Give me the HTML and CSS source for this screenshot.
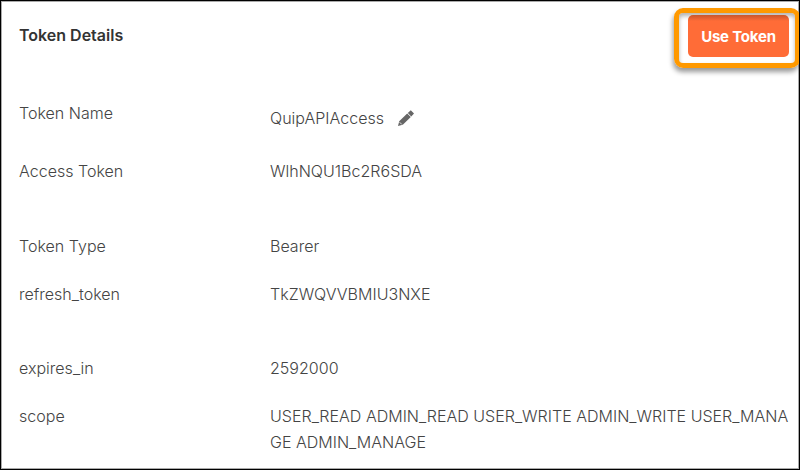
FILE: index.html
```html
<!DOCTYPE html>
<html lang="en">
<head>
  <meta charset="UTF-8">
  <meta name="viewport" content="width=device-width, initial-scale=1.0">
  <title>Token Details</title>
  <link rel="stylesheet" href="styles.css">
</head>
<body>
  <div class="panel">
    <div class="header">
      <h2>Token Details</h2>
      <div class="highlight">
        <button type="button" class="btn">Use Token</button>
      </div>
    </div>
    <dl class="details">
      <div class="row name-row">
        <dt>Token Name</dt>
        <dd class="token-name">QuipAPIAccess
          <svg class="edit-icon" width="18" height="18" viewBox="0 0 18 18">
            <path d="M1 17 L2.2 12.2 L10.2 4.4 L13.8 8 L5.8 15.8 Z M10.8 3.9 L13.8 1.2 L17 4.4 L14.3 7.4 Z" fill="#666"/>
            <path d="M2.6 13.2 L4.8 15.4" stroke="white" stroke-width=".8"/>
          </svg>
        </dd>
      </div>
      <div class="row access-row">
        <dt>Access Token</dt>
        <dd>WlhNQU1Bc2R6SDA</dd>
      </div>
      <div class="row">
        <dt>Token Type</dt>
        <dd>Bearer</dd>
      </div>
      <div class="row refresh-row">
        <dt>refresh_token</dt>
        <dd>TkZWQVVBMIU3NXE</dd>
      </div>
      <div class="row">
        <dt>expires_in</dt>
        <dd>2592000</dd>
      </div>
      <div class="row">
        <dt>scope</dt>
        <dd>USER_READ ADMIN_READ USER_WRITE ADMIN_WRITE USER_MANAGE ADMIN_MANAGE</dd>
      </div>
    </dl>
  </div>
</body>
</html>
```

FILE: styles.css
```css
* {
  box-sizing: border-box;
}
body {
  margin: 0;
  font-family: Inter, sans-serif;
  font-size: 16.04px;
  font-weight: 350;
  line-height: 26px;
  color: #444;
  background: white;
}
.panel {
  height: 470px;
  border: 1px solid black;
  box-shadow: inset 0 0 0 1px #aaa;
  overflow: hidden;
}
.header {
  display: flex;
  justify-content: space-between;
  padding: 7px 0 0 18px;
}
h2 {
  margin: 14px 0 0;
  font-size: 16px;
  font-weight: 600;
  line-height: 26px;
  color: #333;
}
.highlight {
  width: 126px;
  height: 60px;
  margin-right: -1px;
  padding: 2px 6px 5px 9px;
  border: 5px solid #ff9900;
  border-radius: 9px;
  box-shadow: -1px 4px 5px rgba(0, 0, 0, 0.4), inset 0 3px 4px rgba(0, 0, 0, 0.3);
}
.btn {
  display: block;
  width: 101px;
  height: 42px;
  padding: 0;
  border: none;
  border-radius: 5px;
  background: linear-gradient(#c9562c, #ff6c37 6px);
  color: white;
  font-family: inherit;
  font-size: 15px;
  font-weight: 700;
  letter-spacing: -0.2px;
}
.details {
  margin: 32px 0 0;
  padding: 0 8px 0 18px;
}
.row {
  display: flex;
  margin-bottom: 22px;
}
dt {
  width: 251px;
  flex-shrink: 0;
}
dd {
  flex: 1;
  margin: 0;
  word-break: break-all;
}
.name-row {
  margin-bottom: 22px;
}
.token-name {
  display: flex;
  align-items: center;
  gap: 13px;
  height: 36px;
}
.access-row {
  margin-bottom: 49px;
}
.refresh-row {
  margin-bottom: 48px;
}
```
